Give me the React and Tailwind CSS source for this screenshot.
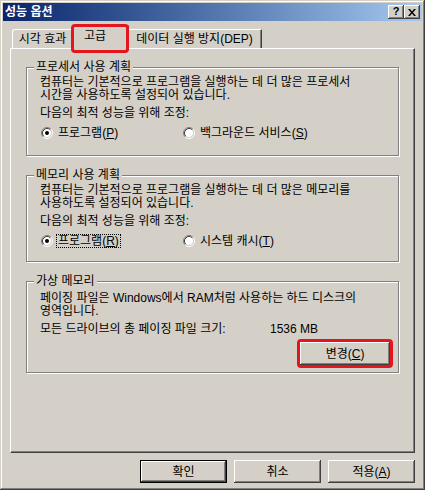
import React from "react";

const FONT = "font-['Liberation_Sans','Noto_Sans_CJK_KR',sans-serif]";
const RAISED =
  "shadow-[inset_-1px_-1px_#404040,inset_1px_1px_#ffffff,inset_-2px_-2px_#808080,inset_2px_2px_#d4d0c8]";

const Radio = ({ checked }) => (
  <svg width="12" height="12" viewBox="0 0 12 12" className="shrink-0">
    <circle cx="6" cy="6" r="4.2" fill="#ffffff" />
    <path d="M2.11 9.89A5.5 5.5 0 0 1 9.89 2.11" stroke="#808080" fill="none" />
    <path d="M9.89 2.11A5.5 5.5 0 0 1 2.11 9.89" stroke="#ffffff" fill="none" />
    <path d="M2.82 9.18A4.5 4.5 0 0 1 9.18 2.82" stroke="#404040" fill="none" />
    <path d="M9.18 2.82A4.5 4.5 0 0 1 2.82 9.18" stroke="#d4d0c8" fill="none" />
    {checked && <circle cx="6" cy="6" r="2" fill="#000000" />}
  </svg>
);

const Group = ({ title, className, children }) => (
  <div className={`relative border border-[#808080] shadow-[inset_1px_1px_#ffffff,1px_1px_#ffffff] pl-[13px] ${className}`}>
    <span className="absolute -top-[7px] left-[7px] bg-[#d4d0c8] px-[2px] leading-[12px] whitespace-nowrap">
      {title}
    </span>
    {children}
  </div>
);

const Button = ({ children, isDefault }) => (
  <button
    className={`flex h-[23px] w-[87px] items-center justify-center bg-[#d4d0c8] leading-[12px] ${RAISED} ${
      isDefault ? "border border-black" : ""
    }`}
  >
    {children}
  </button>
);

export default function App() {
  return (
    <div
      className={`relative flex h-[490px] w-[425px] flex-col bg-[#d4d0c8] p-[3px] text-[12px] text-black ${FONT} shadow-[inset_-1px_-1px_#404040,inset_1px_1px_#d4d0c8,inset_-2px_-2px_#808080,inset_2px_2px_#ffffff]`}
    >
      {/* title bar */}
      <div className="flex h-[18px] items-center justify-between bg-linear-to-r from-[#0a246a] to-[#a6caf0] pl-[2px] pr-[2px]">
        <span className="font-bold leading-[12px] text-white">성능 옵션</span>
        <div className="flex">
          <div className={`flex h-[14px] w-[16px] items-center justify-center bg-[#d4d0c8] pb-[1px] text-[11px] font-bold leading-[11px] ${RAISED}`}>
            ?
          </div>
          <div className={`flex h-[14px] w-[16px] items-center justify-center bg-[#d4d0c8] ${RAISED}`}>
            <svg width="8" height="7" viewBox="0 0 8 7">
              <path d="M0 0h2l2 2.5L6 0h2L5 3.5 8 7H6L4 4.5 2 7H0l3-3.5z" fill="#000000" />
            </svg>
          </div>
        </div>
      </div>

      <div className="flex flex-1 flex-col px-[7px]">
        {/* tabs */}
        <div className="mt-[4px] flex h-[23px] items-end pl-[2px]">
          <div className="flex h-[19px] w-[61px] items-center justify-center rounded-tl-[3px] border-l border-t border-r border-l-white border-t-white border-r-[#404040] shadow-[inset_-1px_0_#808080] leading-[12px] whitespace-nowrap">
            시각 효과
          </div>
          <div className="relative z-10 -mx-[2px] -mb-px flex h-[24px] w-[58px] items-center justify-center rounded-tl-[3px] border-l border-t border-r border-l-white border-t-white border-r-[#404040] bg-[#d4d0c8] pb-[3px] pr-[10px] shadow-[inset_-1px_0_#808080] leading-[12px]">
            고급
          </div>
          <div className="flex h-[19px] w-[135px] items-center justify-center rounded-tl-[3px] border-l border-t border-r border-l-white border-t-white border-r-[#404040] shadow-[inset_-1px_0_#808080] leading-[12px] whitespace-nowrap">
            데이터 실행 방지(DEP)
          </div>
        </div>

        {/* panel */}
        <div className="flex h-[405px] flex-col gap-[19px] border-l border-t border-r border-b border-l-white border-t-white border-r-[#404040] border-b-[#404040] px-[15px] pt-[18px] shadow-[inset_-1px_-1px_#808080]">
          <Group title="프로세서 사용 계획" className="h-[89px] pt-[8px]">
            <p className="leading-[13px] whitespace-nowrap">
              컴퓨터는 기본적으로 프로그램을 실행하는 데 더 많은 프로세서
              <br />
              시간을 사용하도록 설정되어 있습니다.
            </p>
            <p className="mt-[5px] leading-[13px]">다음의 최적 성능을 위해 조정:</p>
            <div className="mt-[6px] flex h-[14px] items-center pl-[1px] leading-[12px]">
              <div className="flex w-[142px] items-center gap-[4px]">
                <Radio checked />
                <span className="px-[1px]">
                  프로그램(<u>P</u>)
                </span>
              </div>
              <div className="flex items-center gap-[4px]">
                <Radio />
                <span className="px-[1px]">
                  백그라운드 서비스(<u>S</u>)
                </span>
              </div>
            </div>
          </Group>

          <Group title="메모리 사용 계획" className="h-[87px] pt-[8px]">
            <p className="leading-[13px] whitespace-nowrap">
              컴퓨터는 기본적으로 프로그램을 실행하는 데 더 많은 메모리를
              <br />
              사용하도록 설정되어 있습니다.
            </p>
            <p className="mt-[5px] leading-[13px]">다음의 최적 성능을 위해 조정:</p>
            <div className="mt-[6px] flex h-[14px] items-center pl-[1px] leading-[12px]">
              <div className="flex w-[142px] items-center gap-[3px]">
                <Radio checked />
                <span className="border border-dotted border-black px-[1px]">
                  프로그램(<u>R</u>)
                </span>
              </div>
              <div className="flex items-center gap-[4px]">
                <Radio />
                <span className="px-[1px]">
                  시스템 캐시(<u>T</u>)
                </span>
              </div>
            </div>
          </Group>

          <Group title="가상 메모리" className="h-[92px] pt-[10px]">
            <p className="leading-[13px] whitespace-nowrap">
              페이징 파일은 Windows에서 RAM처럼 사용하는 하드 디스크의
              <br />
              영역입니다.
            </p>
            <div className="mt-[5px] flex leading-[13px] whitespace-nowrap">
              <span className="w-[230px]">모든 드라이브의 총 페이징 파일 크기:</span>
              <span>1536 MB</span>
            </div>
            <div className="mt-[3px] flex justify-end pr-[5px]">
              <div className="rounded-[4px] border-[3px] border-[#e3161e]">
                <button className={`flex h-[23px] w-[90px] items-center justify-center bg-[#d4d0c8] leading-[12px] ${RAISED}`}>
                  변경(<u>C</u>)
                </button>
              </div>
            </div>
          </Group>
        </div>

        {/* dialog buttons */}
        <div className="mt-[7px] flex justify-end gap-[7px]">
          <Button isDefault>확인</Button>
          <Button>취소</Button>
          <Button>
            적용(<u>A</u>)
          </Button>
        </div>
      </div>

      {/* red highlight around the selected tab */}
      <div className="absolute left-[71px] top-[24px] z-20 h-[29px] w-[58px] rounded-[4px] border-[3px] border-[#e3161e]" />
    </div>
  );
}
